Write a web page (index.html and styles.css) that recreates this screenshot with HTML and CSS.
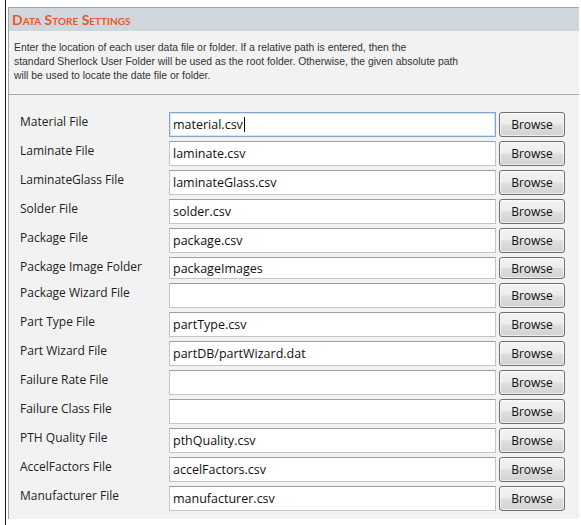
FILE: index.html
```html
<!DOCTYPE html>
<html>
<head>
<meta charset="utf-8">
<link rel="stylesheet" href="styles.css">
</head>
<body>
<div class="frame">
  <section class="panel">
    <header class="panel-head"><h1 class="title">Data Store Settings</h1></header>
    <p class="desc">Enter the location of each user data file or folder. If a relative path is entered, then the<br>standard Sherlock User Folder will be used as the root folder. Otherwise, the given absolute path<br>will be used to locate the date file or folder.</p>
    <div class="form">
      <div class="row"><span class="label">Material File</span><div class="field focus"><span>material.csv</span><span class="caret"></span></div><button class="btn">Browse</button></div>
      <div class="row"><span class="label">Laminate File</span><div class="field"><span>laminate.csv</span></div><button class="btn">Browse</button></div>
      <div class="row"><span class="label">LaminateGlass File</span><div class="field"><span>laminateGlass.csv</span></div><button class="btn">Browse</button></div>
      <div class="row"><span class="label">Solder File</span><div class="field"><span>solder.csv</span></div><button class="btn">Browse</button></div>
      <div class="row"><span class="label">Package File</span><div class="field"><span>package.csv</span></div><button class="btn">Browse</button></div>
      <div class="row short"><span class="label">Package Image Folder</span><div class="field"><span>packageImages</span></div><button class="btn">Browse</button></div>
      <div class="row"><span class="label">Package Wizard File</span><div class="field"></div><button class="btn">Browse</button></div>
      <div class="row"><span class="label">Part Type File</span><div class="field"><span>partType.csv</span></div><button class="btn">Browse</button></div>
      <div class="row"><span class="label">Part Wizard File</span><div class="field"><span>partDB/partWizard.dat</span></div><button class="btn">Browse</button></div>
      <div class="row"><span class="label">Failure Rate File</span><div class="field"></div><button class="btn">Browse</button></div>
      <div class="row"><span class="label">Failure Class File</span><div class="field"></div><button class="btn">Browse</button></div>
      <div class="row"><span class="label">PTH Quality File</span><div class="field"><span>pthQuality.csv</span></div><button class="btn">Browse</button></div>
      <div class="row"><span class="label">AccelFactors File</span><div class="field"><span>accelFactors.csv</span></div><button class="btn">Browse</button></div>
      <div class="row"><span class="label">Manufacturer File</span><div class="field"><span>manufacturer.csv</span></div><button class="btn">Browse</button></div>
    </div>
  </section>
</div>
</body>
</html>
```
FILE: styles.css
```css
html, body {
  margin: 0;
  padding: 0;
  background: #ffffff;
}
.frame {
  margin-left: 5px;
  border-left: 1px solid #1a1a1a;
  padding: 7px 0 0 2px;
  height: 525px;
  box-sizing: border-box;
}
.panel {
  width: 571px;
  box-sizing: border-box;
  border-left: 1px solid #a4a4a4;
  border-top: 1px solid #a4a4a4;
  background: #f2f2f2;
}
.panel-head {
  height: 23px;
  background: #cfd7dc;
  padding-left: 3px;
}
.title {
  margin: 0;
  font-family: "Lato", "Liberation Sans", sans-serif;
  font-weight: 700;
  font-size: 14px;
  line-height: 23px;
  font-variant: small-caps;
  color: #e8582a;
  letter-spacing: 0;
}
.desc {
  margin: 0;
  padding: 10px 0 11px 5px;
  font-family: "Liberation Sans", sans-serif;
  font-size: 10.4px;
  line-height: 14px;
  color: #333333;
  border-bottom: 1px solid #a8a8a8;
}
.form {
  padding: 17px 0 8px 11px;
  display: flex;
  flex-direction: column;
  gap: 4px;
}
.row {
  display: grid;
  grid-template-columns: 146px 327px 66px;
  column-gap: 3px;
  height: 25px;
  align-items: start;
}
.row.short {
  height: 22px;
}
.label {
  font-family: "Open Sans", "Noto Sans", sans-serif;
  font-size: 12px;
  line-height: 18px;
  padding-top: 1px;
  color: #222222;
  white-space: nowrap;
}
.field {
  height: 100%;
  box-sizing: border-box;
  background: #ffffff;
  border: 1px solid #c4c4c4;
  border-top-color: #9e9e9e;
  display: flex;
  align-items: center;
  padding-left: 3px;
  font-family: "Open Sans", "Noto Sans", sans-serif;
  font-size: 12.5px;
  color: #111111;
  white-space: nowrap;
  overflow: hidden;
}
.field.focus {
  border-color: #7fa6c8;
  box-shadow: inset 0 0 0 1px #d3e4f3;
}
.caret {
  display: inline-block;
  width: 1px;
  height: 15px;
  background: #000000;
  margin-left: 1px;
}
.btn {
  height: 100%;
  box-sizing: border-box;
  margin: 0;
  padding: 0;
  border: 1px solid #707070;
  border-radius: 3px;
  background: linear-gradient(#f4f4f4 0%, #ececec 48%, #dedede 52%, #d2d2d2 100%);
  font-family: "Open Sans", "Noto Sans", sans-serif;
  font-size: 12px;
  color: #111111;
  box-shadow: inset 0 0 0 1px rgba(255,255,255,0.6);
}
```
